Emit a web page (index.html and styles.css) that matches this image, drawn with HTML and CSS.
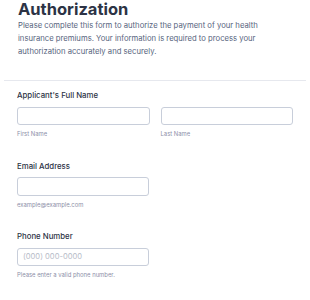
FILE: index.html
```html
<!DOCTYPE html>
<html lang="en">
<head>
    <meta charset="UTF-8">
    <meta name="viewport" content="width=device-width, initial-scale=1.0">
    <title>Authorization</title>
    <link rel="stylesheet" href="styles.css">
</head>
<body>
    <div class="form">
        <div class="header">
            <h1>Authorization</h1>
            <p>Please complete this form to authorize the payment of your health insurance premiums. Your information is required to process your authorization accurately and securely.</p>
        </div>

        <div class="field">
            <label class="label">Applicant's Full Name</label>
            <div class="name-row">
                <div class="sub">
                    <input type="text">
                    <span class="hint">First Name</span>
                </div>
                <div class="sub">
                    <input type="text">
                    <span class="hint">Last Name</span>
                </div>
            </div>
        </div>

        <div class="field">
            <label class="label">Email Address</label>
            <div class="sub half">
                <input type="email">
                <span class="hint">example@example.com</span>
            </div>
        </div>

        <div class="field">
            <label class="label">Phone Number</label>
            <div class="sub half">
                <input type="tel" placeholder="(000) 000-0000">
                <span class="hint">Please enter a valid phone number.</span>
            </div>
        </div>
    </div>
</body>
</html>
```

FILE: styles.css
```css
body {
    margin: 0;
    background: #fff;
    font-family: Inter, "Noto Sans", sans-serif;
    color: #2c3345;
}

.form {
    padding: 0 4px;
}

.header {
    padding: 0 14px 22px;
    border-bottom: 1px solid #e6e8ee;
}

h1 {
    margin: 0;
    font-size: 16.5px;
    line-height: 19px;
    font-weight: 700;
    color: #2c3345;
}

.header p {
    margin: 0;
    font-size: 7.7px;
    line-height: 13px;
    color: #57647e;
}

.field {
    padding: 8px 13px 0;
}

.label {
    display: block;
    font-size: 7.8px;
    line-height: 12px;
    font-weight: 500;
    margin: 0 0 5.5px;
}

.name-row {
    display: flex;
    gap: 11px;
}

.sub {
    flex: 1;
    display: flex;
    flex-direction: column;
}

.sub.half {
    width: 132px;
}

input {
    box-sizing: border-box;
    height: 18.5px;
    width: 100%;
    margin: 0;
    border: 1px solid #c8ceda;
    border-radius: 3px;
    padding: 0 5px;
    font-family: inherit;
    font-size: 7.6px;
    color: #2c3345;
    background: #fff;
}

input::placeholder {
    color: #b8bdc9;
}

.hint {
    font-size: 5.9px;
    line-height: 9px;
    color: #8d8fa8;
    margin: 4px 0 13.5px;
}
```
